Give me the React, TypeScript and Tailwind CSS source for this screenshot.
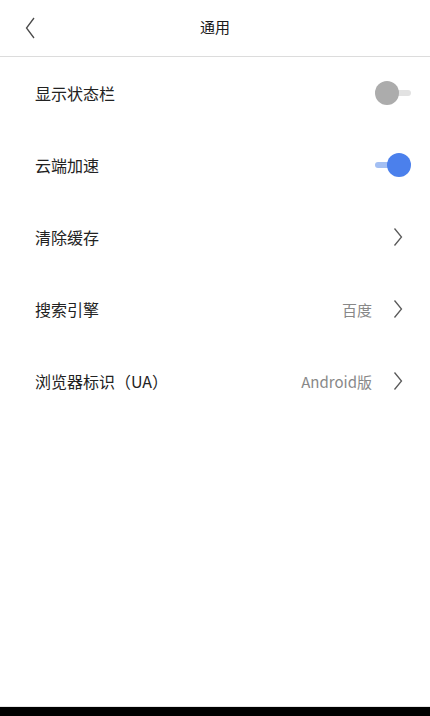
import { useState } from 'react';

type Row =
  | { kind: 'toggle'; label: string; on: boolean }
  | { kind: 'link'; label: string; value?: string };

const rows: Row[] = [
  { kind: 'toggle', label: '显示状态栏', on: false },
  { kind: 'toggle', label: '云端加速', on: true },
  { kind: 'link', label: '清除缓存' },
  { kind: 'link', label: '搜索引擎', value: '百度' },
  { kind: 'link', label: '浏览器标识（UA）', value: 'Android版' },
];

const Chevron = () => (
  <svg width="10" height="20" viewBox="0 0 10 20" fill="none" className="shrink-0">
    <polyline points="1.5,1.5 8.5,10 1.5,18.5" stroke="#5a5a5a" strokeWidth="1.3" strokeLinejoin="miter" />
  </svg>
);

const Toggle = ({ on, onClick }: { on: boolean; onClick: () => void }) => (
  <button onClick={onClick} className="relative w-[36px] h-[24px] flex items-center">
    {/* track */}
    {on ? (
      <div className="h-[6px] w-[26px] rounded-full bg-[#a3bff3]" />
    ) : (
      <div className="h-[6px] w-[26px] ml-[10px] rounded-full bg-[#e2e2e2]" />
    )}
    <div
      className={`absolute top-0 w-[24px] h-[24px] rounded-full ${
        on ? 'right-0 bg-[#4b80ec]' : 'left-0 bg-[#acacac]'
      }`}
    />
  </button>
);

export default function App() {
  const [toggles, setToggles] = useState<Record<number, boolean>>({ 0: false, 1: true });

  return (
    <div
      className="min-h-[716px] flex flex-col bg-white text-[#222]"
      style={{ fontFamily: '"Noto Sans CJK SC", "Noto Sans", sans-serif' }}
    >
      {/* Header */}
      <header className="h-[57px] flex items-center relative border-b border-[#dcdcdc]">
        <button className="absolute left-[25px] top-[17px] p-0">
          <svg width="10" height="22" viewBox="0 0 10 22" fill="none">
            <polyline points="9,1 1.5,11 9,21" stroke="#4a4a4a" strokeWidth="1.3" />
          </svg>
        </button>
        <h1 className="flex-1 text-center text-[15px] leading-none text-[#1a1a1a] -mt-[3px]">通用</h1>
      </header>

      {/* Settings list */}
      <div className="flex flex-col flex-1">
        {rows.map((row, i) => (
          <div key={i} className="h-[72px] flex items-center pl-[35px]">
            <span className="flex-1 text-[16px] leading-none">{row.label}</span>
            {row.kind === 'toggle' ? (
              <div className="pr-[19px]">
                <Toggle
                  on={toggles[i]}
                  onClick={() => setToggles((t) => ({ ...t, [i]: !t[i] }))}
                />
              </div>
            ) : (
              <div className="flex items-center pr-[27px]">
                {row.value && (
                  <span className="text-[15px] leading-none text-[#888] mr-[21px]">{row.value}</span>
                )}
                <Chevron />
              </div>
            )}
          </div>
        ))}
      </div>

      {/* Nav bar */}
      <div className="h-[1px] bg-[#e6e6e6]" />
      <div className="h-[9px] bg-black" />
    </div>
  );
}
